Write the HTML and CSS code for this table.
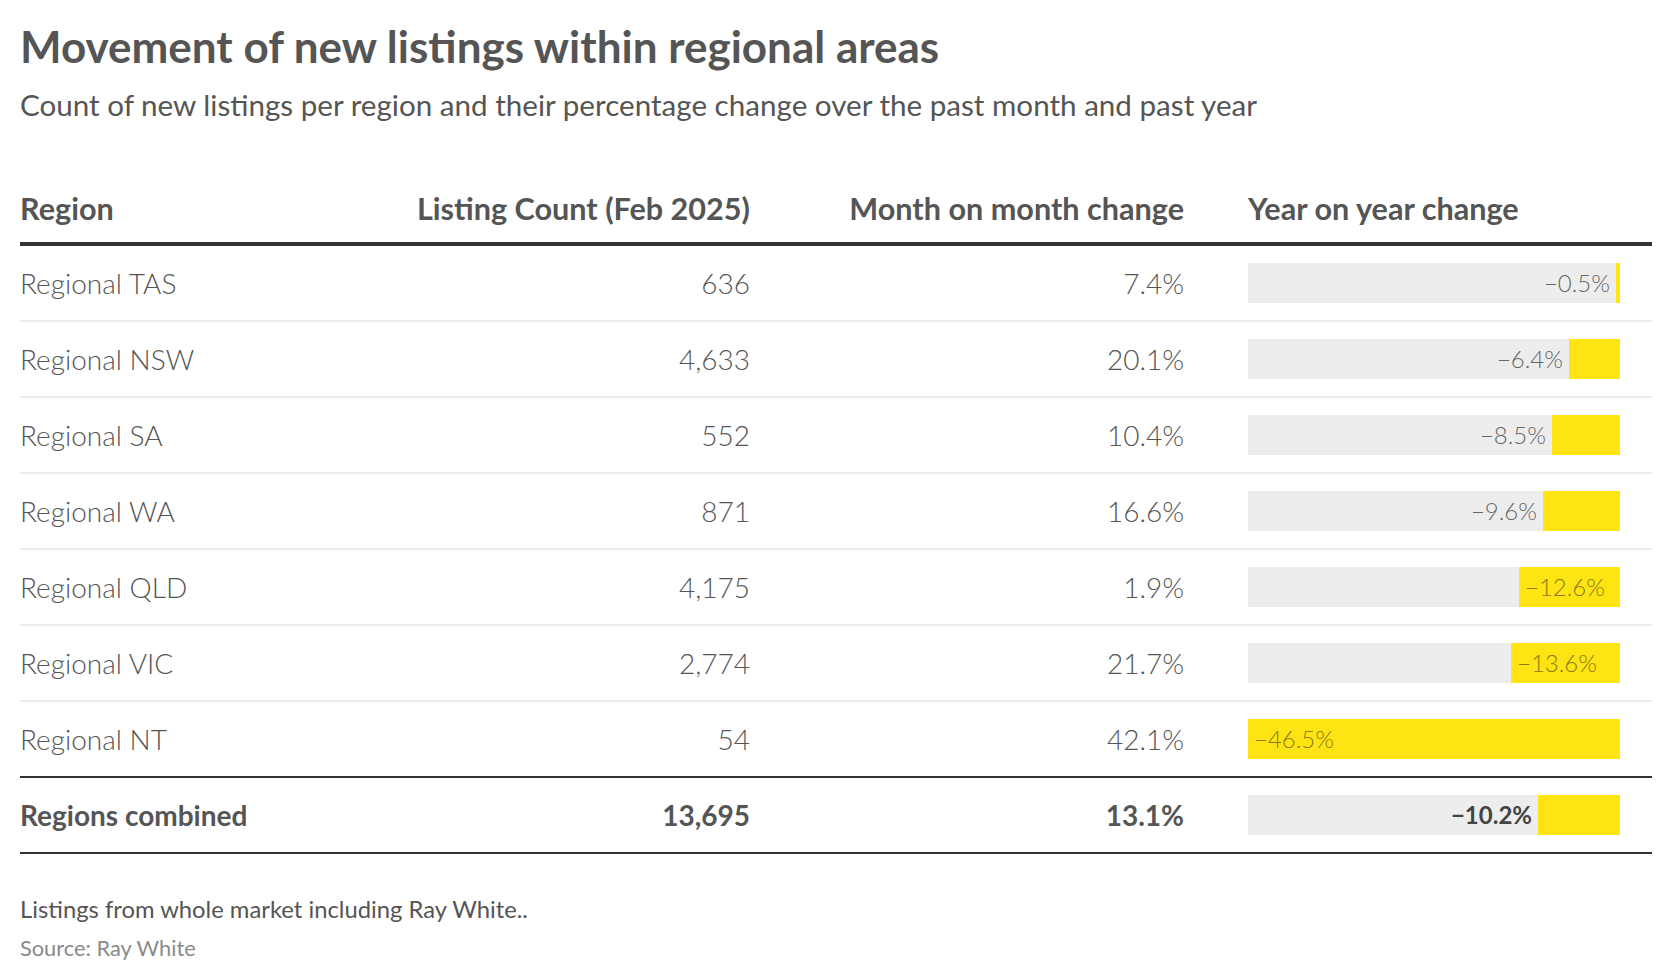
FILE: index.html
```html
<!DOCTYPE html>
<html lang="en">
<head>
<meta charset="utf-8">
<title>Movement of new listings within regional areas</title>
<link rel="stylesheet" href="styles.css">
</head>
<body>
<div class="chart">
  <h1 class="title">Movement of new listings within regional areas</h1>
  <p class="subtitle">Count of new listings per region and their percentage change over the past month and past year</p>

  <div class="table">
    <div class="row head">
      <div class="cell c-region">Region</div>
      <div class="cell c-num">Listing Count (Feb 2025)</div>
      <div class="cell c-num">Month on month change</div>
      <div class="cell c-bar">Year on year change</div>
    </div>

    <div class="row">
      <div class="cell c-region">Regional TAS</div>
      <div class="cell c-num">636</div>
      <div class="cell c-num">7.4%</div>
      <div class="cell c-bar"><div class="track"><span class="label">−0.5%</span><div class="fill" style="width:4px"></div></div></div>
    </div>
    <div class="row">
      <div class="cell c-region">Regional NSW</div>
      <div class="cell c-num">4,633</div>
      <div class="cell c-num">20.1%</div>
      <div class="cell c-bar"><div class="track"><span class="label">−6.4%</span><div class="fill" style="width:51px"></div></div></div>
    </div>
    <div class="row">
      <div class="cell c-region">Regional SA</div>
      <div class="cell c-num">552</div>
      <div class="cell c-num">10.4%</div>
      <div class="cell c-bar"><div class="track"><span class="label">−8.5%</span><div class="fill" style="width:68px"></div></div></div>
    </div>
    <div class="row">
      <div class="cell c-region">Regional WA</div>
      <div class="cell c-num">871</div>
      <div class="cell c-num">16.6%</div>
      <div class="cell c-bar"><div class="track"><span class="label">−9.6%</span><div class="fill" style="width:77px"></div></div></div>
    </div>
    <div class="row">
      <div class="cell c-region">Regional QLD</div>
      <div class="cell c-num">4,175</div>
      <div class="cell c-num">1.9%</div>
      <div class="cell c-bar"><div class="track"><div class="fill" style="width:101px"><span class="label inside">−12.6%</span></div></div></div>
    </div>
    <div class="row">
      <div class="cell c-region">Regional VIC</div>
      <div class="cell c-num">2,774</div>
      <div class="cell c-num">21.7%</div>
      <div class="cell c-bar"><div class="track"><div class="fill" style="width:109px"><span class="label inside">−13.6%</span></div></div></div>
    </div>
    <div class="row last">
      <div class="cell c-region">Regional NT</div>
      <div class="cell c-num">54</div>
      <div class="cell c-num">42.1%</div>
      <div class="cell c-bar"><div class="track"><div class="fill" style="width:372px"><span class="label inside">−46.5%</span></div></div></div>
    </div>

    <div class="row total">
      <div class="cell c-region">Regions combined</div>
      <div class="cell c-num">13,695</div>
      <div class="cell c-num">13.1%</div>
      <div class="cell c-bar"><div class="track"><span class="label">−10.2%</span><div class="fill" style="width:82px"></div></div></div>
    </div>
  </div>

  <p class="notes">Listings from whole market including Ray White..</p>
  <p class="source">Source: Ray White</p>
</div>
</body>
</html>
```

FILE: styles.css
```css
html, body {
  margin: 0;
  padding: 0;
  background: #ffffff;
}

body {
  font-family: Lato, "Noto Sans", sans-serif;
  color: #555555;
}

.chart {
  padding: 20px 20px 0 20px;
}

.title {
  margin: 0;
  font-size: 44px;
  line-height: 1.2;
  font-weight: 700;
  color: #555555;
}

.subtitle {
  margin: 14px 0 0 0;
  font-size: 29.6px;
  line-height: 36px;
  font-weight: 400;
  color: #555555;
}

.table {
  margin-top: 67px;
  display: flex;
  flex-direction: column;
}

.row {
  display: grid;
  grid-template-columns: 380px 350px 434px 404px;
  column-gap: 0;
  align-items: center;
  height: 74px;
  border-bottom: 2px solid #ebebeb;
  font-size: 28px;
  font-weight: 300;
}

.row .c-bar {
  margin-left: 64px;
}

.row.head {
  height: auto;
  padding-bottom: 15px;
  border-bottom: 4px solid #333333;
  font-size: 30.6px;
  line-height: 37px;
  font-weight: 700;
}

.row.last {
  border-bottom: 2px solid #333333;
}

.row.total {
  font-weight: 700;
  border-bottom: 2px solid #333333;
}

.cell {
  white-space: nowrap;
}

.c-num {
  text-align: right;
}

.track {
  width: 372px;
  height: 40px;
  background: #ededed;
  display: flex;
  justify-content: flex-end;
  align-items: center;
}

.fill {
  height: 40px;
  background: #ffe414;
  display: flex;
  align-items: center;
  flex-shrink: 0;
}

.label {
  font-size: 24px;
  font-weight: 300;
  color: #666666;
  padding-right: 6px;
}

.label.inside {
  padding: 0 0 0 6px;
  color: #8a7a12;
}

.total .label {
  font-weight: 700;
  color: #444444;
}

.notes {
  margin: 41px 0 0 0;
  font-size: 23.8px;
  line-height: 29px;
  color: #555555;
}

.source {
  margin: 11px 0 0 0;
  font-size: 21.8px;
  line-height: 26px;
  color: #8a8a8a;
}
```
